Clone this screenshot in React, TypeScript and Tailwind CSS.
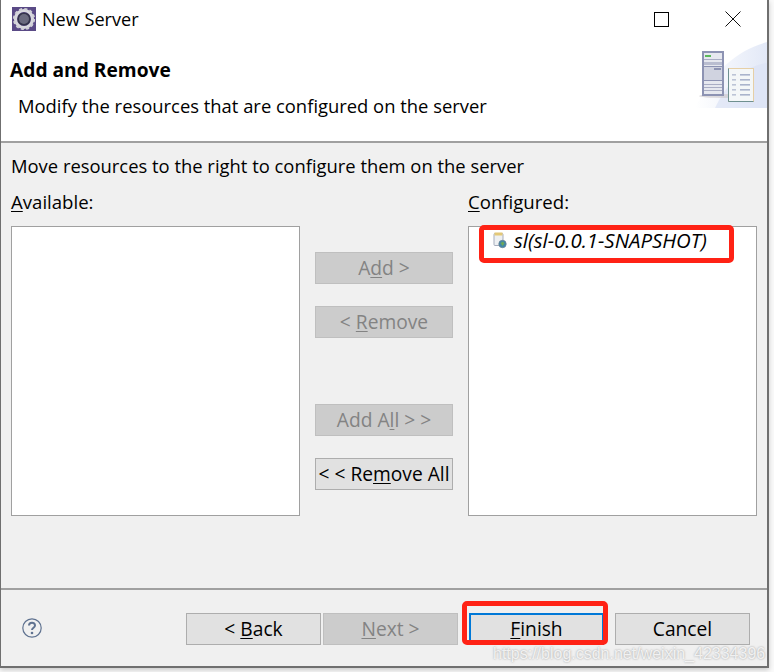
const font = { fontFamily: '"Open Sans", "Noto Sans", sans-serif' };

function U({ children }: { children: string }) {
  return <span className="underline underline-offset-2 decoration-1">{children}</span>;
}

function Btn({ children, disabled, width }: { children: React.ReactNode; disabled?: boolean; width: string }) {
  return (
    <div
      className={`${width} h-8 flex items-center justify-center border text-[19.2px] leading-none whitespace-nowrap ${
        disabled ? 'bg-[#cccccc] border-[#bfbfbf] text-[#838383]' : 'bg-[#e1e1e1] border-[#adadad] text-black'
      }`}
    >
      <span>{children}</span>
    </div>
  );
}

function Gear() {
  return (
    <svg width="24" height="24" viewBox="0 0 24 24" className="shrink-0">
      <rect width="24" height="24" fill="#5a4a86" />
      <circle cx="12" cy="12" r="8.5" fill="none" stroke="#d9d9de" strokeWidth="3.2" />
      <circle cx="12" cy="12" r="10" fill="none" stroke="#d0d0d6" strokeWidth="2.2" strokeDasharray="3 2.24" />
      <circle cx="12" cy="12" r="6.6" fill="#34344a" />
      <circle cx="12" cy="12" r="5" fill="#6a6a7e" />
    </svg>
  );
}

function Banner() {
  return (
    <svg width="74" height="68" viewBox="0 0 74 68" className="shrink-0">
      <defs>
        <linearGradient id="bg" x1="0" x2="1" y1="0" y2="0">
          <stop offset="0" stopColor="#ffffff" />
          <stop offset="1" stopColor="#d9e1f4" />
        </linearGradient>
      </defs>
      <path d="M2 68 C 20 30 45 10 74 2 V68 Z" fill="url(#bg)" opacity="0.75" />
      <path d="M22 68 C 35 40 55 25 74 23 V68 Z" fill="#dbe2f5" opacity="0.7" />
      <ellipse cx="30" cy="56" rx="24" ry="2" fill="#c9c4c8" opacity="0.6" />
      <rect x="9" y="11" width="22" height="45" fill="#8d93b3" />
      <rect x="11" y="13" width="18" height="41" fill="#e6e8ef" />
      <rect x="12" y="15" width="6" height="2" fill="#5cb85c" />
      <rect x="11" y="19" width="18" height="1" fill="#a9adc4" />
      <rect x="11" y="22" width="18" height="3" fill="#b9bdd0" />
      <rect x="11" y="26" width="18" height="1" fill="#8d93b3" />
      <rect x="11" y="27" width="18" height="13" fill="#d0d3e0" />
      <rect x="21" y="28" width="7" height="2" fill="#8d93b3" />
      <rect x="11" y="40" width="18" height="1" fill="#8d93b3" />
      <rect x="11" y="44" width="18" height="1" fill="#a9adc4" />
      <rect x="11" y="47" width="18" height="1" fill="#a9adc4" />
      <rect x="11" y="50" width="18" height="1" fill="#a9adc4" />
      <rect x="35.5" y="28.5" width="25" height="33" fill="#f4f7f8" stroke="#e6cfa6" strokeWidth="1" />
      <path d="M35.5 28.5 V61.5 H60.5" fill="none" stroke="#6f9090" strokeWidth="1" />
      {[34, 39, 44, 49, 54].map((y) => (
        <g key={y}>
          <rect x="39" y={y} width="4" height="1.6" fill="#bcc4d6" />
          <rect x="47" y={y} width="10" height="1.6" fill="#aab4cc" />
        </g>
      ))}
    </svg>
  );
}

function ResourceIcon() {
  return (
    <svg width="14" height="17" viewBox="0 0 14 17" className="shrink-0">
      <rect x="1" y="1.5" width="9" height="12" rx="1" fill="#eef0f2" stroke="#a6adbd" />
      <rect x="1.5" y="0.5" width="8" height="3" fill="#e3c877" />
      <circle cx="9.5" cy="12" r="3.7" fill="#3f87a8" stroke="#6a8296" strokeWidth="0.8" />
      <path d="M7.5 11 L10 9.5 L11.5 11.5 L9.5 14 Z" fill="#6da85a" />
    </svg>
  );
}

export default function App() {
  return (
    <div className="relative w-[774px] h-[672px] bg-[#fafafa] overflow-hidden" style={font}>
      <div className="w-[769px] h-[668px] flex flex-col border-l border-r-2 border-b-2 border-[#6f6f6f] bg-[#f0f0f0] text-black shadow-[0_2px_5px_rgba(0,0,0,0.2)]">
        <div className="h-[143px] bg-white border-b-2 border-[#a0a0a0] shrink-0 flex flex-col">
          <div className="h-[38px] flex items-center pl-[11px] shrink-0">
            <Gear />
            <span className="ml-[6px] text-[18.1px] leading-none">New Server</span>
            <div className="ml-auto flex items-center">
              <div className="w-[15px] h-[15px] border-[1.5px] border-black mr-[56px]" />
              <svg width="16" height="16" viewBox="0 0 16 16" className="mr-[26px]">
                <path d="M0.5 0.5 L15.5 15.5 M15.5 0.5 L0.5 15.5" stroke="#111" strokeWidth="1" />
              </svg>
            </div>
          </div>
          <div className="flex justify-between">
            <div className="flex flex-col">
              <div className="pl-[9px] mt-[20px] text-[19.2px] font-bold leading-6">Add and Remove</div>
              <div className="pl-[17px] mt-3 text-[18.4px] leading-6">Modify the resources that are configured on the server</div>
            </div>
            <div className="mt-[2px]">
              <Banner />
            </div>
          </div>
        </div>
        <div className="flex-1 flex flex-col">
          <div className="pl-[10px] pt-[11px] text-[18.4px] leading-6">Move resources to the right to configure them on the server</div>
          <div className="flex pl-[10px] mt-3">
            <div className="flex flex-col w-[289px]">
              <div className="text-[18.6px] leading-6"><U>A</U>vailable:</div>
              <div className="mt-[12px] h-[290px] bg-white border border-[#a0a0a0]" />
            </div>
            <div className="w-[138px] ml-[15px] pt-[62px] flex flex-col">
              <Btn disabled width="w-[138px]">A<U>d</U>d &gt;</Btn>
              <div className="h-[22px]" />
              <Btn disabled width="w-[138px]">&lt; <U>R</U>emove</Btn>
              <div className="h-[66px]" />
              <Btn disabled width="w-[138px]">Add A<U>l</U>l &gt; &gt;</Btn>
              <div className="h-[22px]" />
              <Btn width="w-[138px]">&lt; &lt; Re<U>m</U>ove All</Btn>
            </div>
            <div className="flex flex-col w-[289px] ml-[15px]">
              <div className="text-[18.6px] leading-6"><U>C</U>onfigured:</div>
              <div className="mt-[12px] h-[290px] bg-white border border-[#a0a0a0] pl-[24px] pt-[1px]">
                <div className="flex items-center gap-[7px] h-6">
                  <ResourceIcon />
                  <span className="italic text-[20.4px] leading-none whitespace-nowrap">sl(sl-0.0.1-SNAPSHOT)</span>
                </div>
              </div>
            </div>
          </div>
          <div className="mt-[72px] border-t-2 border-[#a0a0a0]" />
          <div className="flex items-center pt-[23px] pl-[21px]">
            <svg width="20" height="20" viewBox="0 0 20 20" className="shrink-0 mt-[-2px]">
              <circle cx="10" cy="10" r="9.2" fill="none" stroke="#5f7290" strokeWidth="1.2" />
              <path d="M7 7.6 C7 3.8 13 3.8 13 7.4 C13 9.6 10 9.8 10 12" fill="none" stroke="#5f7290" strokeWidth="2" />
              <circle cx="10" cy="15" r="1.3" fill="#5f7290" />
            </svg>
            <div className="ml-[144px] flex">
              <Btn width="w-[135px]">&lt; <U>B</U>ack</Btn>
              <div className="w-[2px]" />
              <Btn disabled width="w-[135px]"><U>N</U>ext &gt;</Btn>
              <div className="w-[11px]" />
              <div className="w-[135px] h-8 flex items-center justify-center bg-[#e1e1e1] border-2 border-[#0078d7] text-[19.2px] leading-none">
                <span><U>F</U>inish</span>
              </div>
              <div className="w-[11px]" />
              <Btn width="w-[135px]">Cancel</Btn>
            </div>
          </div>
        </div>
      </div>
      <div className="absolute left-[479px] top-[225px] w-[255px] h-[38px] border-[5px] border-[#ff2215] rounded-[5px]" />
      <div className="absolute left-[462px] top-[601px] w-[146px] h-[44px] border-[5px] border-[#ff2215] rounded-[5px]" />
      <div className="absolute left-[493px] top-[642px] text-[16px] leading-6 text-white/80 whitespace-nowrap [text-shadow:0_0_2px_rgba(110,110,110,0.7)]" style={{ fontFamily: '"Liberation Sans", sans-serif' }}>
        https://blog.csdn.net/weixin_42334396
      </div>
    </div>
  );
}
